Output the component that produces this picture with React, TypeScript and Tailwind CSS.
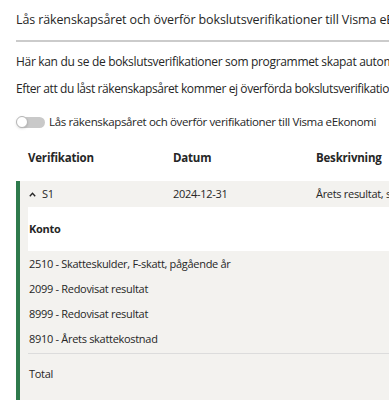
import React from "react";

const rows = [
  "2510 - Skatteskulder, F-skatt, pågående år",
  "2099 - Redovisat resultat",
  "8999 - Redovisat resultat",
  "8910 - Årets skattekostnad",
];

function Toggle() {
  return (
    <div className="relative ml-[1px] h-[11px] w-[28px] shrink-0 rounded-full bg-[#c9c9c9]">
      <div className="absolute -left-[1px] top-1/2 h-[12px] w-[12px] -translate-y-1/2 rounded-full border border-[#b5b5b5] bg-white shadow-sm" />
    </div>
  );
}

export default function App() {
  return (
    <div className="h-[400px] w-[389px] overflow-hidden bg-white font-['Open_Sans',sans-serif] text-[12px] leading-[18px] text-[#262626]">
      <div className="w-[700px] whitespace-nowrap pl-[16px]">
        <h1 className="pt-[11px] text-[12.5px] font-normal tracking-[-0.12px]">
          Lås räkenskapsåret och överför bokslutsverifikationer till Visma eEkonomi
        </h1>
        <div className="mt-[11px] h-[2px] bg-[#cbcbcb]" />

        <p className="mt-[11px] tracking-[-0.32px]">
          Här kan du se de bokslutsverifikationer som programmet skapat automatiskt.
        </p>
        <p className="mt-[9px] tracking-[-0.4px]">
          Efter att du låst räkenskapsåret kommer ej överförda bokslutsverifikationer att överföras.
        </p>

        <div className="mt-[15px] flex items-center gap-[4px]">
          <Toggle />
          <span className="text-[11.5px] tracking-[-0.35px]">
            Lås räkenskapsåret och överför verifikationer till Visma eEkonomi
          </span>
        </div>

        <div className="mt-[18px] flex pl-[12px] text-[11.5px] font-bold tracking-[-0.2px]">
          <div className="w-[145px]">Verifikation</div>
          <div className="w-[143px]">Datum</div>
          <div>Beskrivning</div>
        </div>

        <div className="mt-[14px] border-l-4 border-[#2e7a4c] bg-[#f3f2ef] pb-[20px] text-[11px] tracking-[-0.3px]">
          <div className="flex h-[26px] items-center pl-[9px]">
            <div className="flex w-[144px] items-center">
              <svg width="7" height="5" viewBox="0 0 7 5" className="mr-[6px]">
                <polyline points="0.8,4.2 3.5,1.3 6.2,4.2" fill="none" stroke="#262626" strokeWidth="1.4" />
              </svg>
              <span>S1</span>
            </div>
            <div className="w-[143px]">2024-12-31</div>
            <div>Årets resultat, skatt</div>
          </div>

          <div className="ml-[8px] flex h-[44px] items-center bg-white pl-[1px] font-bold">
            Konto
          </div>

          <div className="ml-[8px]">
            {rows.map((r, i) => (
              <div key={r} className={`flex items-center pl-[1px] ${i === 3 ? "h-[26px]" : "h-[25px]"}`}>
                {r}
              </div>
            ))}
            <div className="mt-[1px] h-px bg-[#dcdcdc]" />
            <div className="pl-[1px] pt-[11px]">Total</div>
          </div>
        </div>
      </div>
    </div>
  );
}
